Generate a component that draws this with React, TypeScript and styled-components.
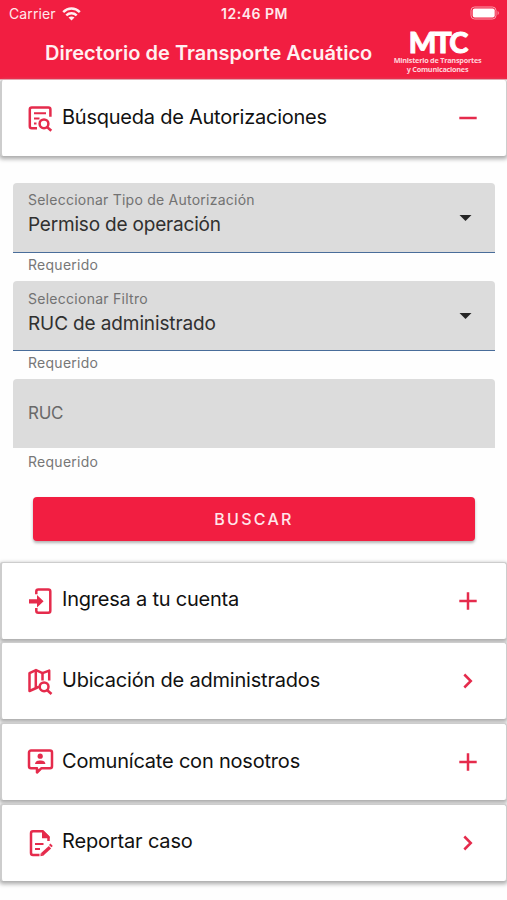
import React from "react";
import styled, { createGlobalStyle } from "styled-components";

const RED = "#f21e41";
const ICON = "#e52b4c";

const GlobalStyle = createGlobalStyle`
  * { box-sizing: border-box; }
  body { margin: 0; background: #fefefe; font-family: Inter, "Liberation Sans", sans-serif; }
`;

const Screen = styled.div`
  width: 507px;
  height: 900px;
  overflow: hidden;
  display: flex;
  flex-direction: column;
  background: #fefefe;
`;

const Header = styled.header`
  height: 80px;
  flex: none;
  background: ${RED};
  color: #ffe9ec;
  border-bottom: 1px solid #f4a3b0;
`;

const StatusBar = styled.div`
  height: 28px;
  display: grid;
  grid-template-columns: 1fr auto 1fr;
  align-items: center;
  padding: 0 7px 0 9px;
  font-size: 14px;
  line-height: 28px;
`;

const Carrier = styled.div`
  display: flex;
  align-items: center;
  gap: 6px;
  letter-spacing: 0.1px;
`;

const Clock = styled.div`
  font-weight: 600;
  font-size: 14px;
  letter-spacing: 0.5px;
`;

const Battery = styled.div`
  justify-self: end;
  display: flex;
  margin-top: -2px;
`;

const TitleBar = styled.div`
  display: flex;
  height: 51px;
  padding-left: 45px;
`;

const Title = styled.h1`
  margin: 0;
  width: 349px;
  font-size: 20px;
  line-height: 50px;
  font-weight: 600;
  letter-spacing: 0.02px;
  white-space: nowrap;
  color: #fff0f1;
`;

const Brand = styled.div`
  width: 87px;
  display: flex;
  flex-direction: column;
  align-items: center;
  color: #fff;
  white-space: nowrap;
`;

const BrandName = styled.div`
  font-family: Lato, "Noto Sans", sans-serif;
  font-size: 29px;
  line-height: 28px;
  font-weight: 900;
  letter-spacing: -2px;
  -webkit-text-stroke: 0.9px #fff;
`;

const BrandLine = styled.div`
  font-family: "Open Sans", "Noto Sans", sans-serif;
  font-size: 7.3px;
  line-height: 8.5px;
  font-weight: 700;
  letter-spacing: -0.25px;
  color: #ffd3da;
`;

const Card = styled.button<{ $first?: boolean }>`
  flex: none;
  width: 507px;
  height: ${(p) => (p.$first ? 76 : 77)}px;
  display: flex;
  align-items: center;
  padding: 0 26px 0 23px;
  background: #fff;
  border: solid #cdcdcd;
  border-width: ${(p) => (p.$first ? "0 1.5px 0 2px" : "1px 1.5px 0 2px")};
  border-radius: 3px;
  box-shadow: 0 2px 4px 1px #aaa;
  font-family: inherit;
  text-align: left;
`;

const CardLabel = styled.span<{ $spacing: number }>`
  flex: 1;
  margin-left: 8px;
  font-size: 20px;
  line-height: 24px;
  letter-spacing: ${(p) => p.$spacing}px;
  color: #111;
  white-space: nowrap;
  padding-bottom: 3px;
`;

const Glyph = styled.svg`
  flex: none;
  display: block;
`;

const Form = styled.form`
  flex: none;
  height: 405.5px;
  padding: 26.6px 12px 0 13px;
  display: flex;
  flex-direction: column;
`;

const Field = styled.div`
  height: 98.2px;
`;

const FieldBox = styled.div<{ $active?: boolean }>`
  height: ${(p) => (p.$active ? 70 : 68.8)}px;
  display: flex;
  align-items: center;
  justify-content: space-between;
  padding: ${(p) => (p.$active ? "1.5px" : "0")} 23px 0 15px;
  background: #dcdcdc;
  border-radius: 4px 4px 0 0;
  border-bottom: ${(p) => (p.$active ? "1.5px solid #496d9a" : "0")};
`;

const FieldText = styled.div`
  display: flex;
  flex-direction: column;
`;

const FieldLabel = styled.label<{ $spacing: number }>`
  font-size: 14px;
  line-height: 18px;
  letter-spacing: ${(p) => p.$spacing}px;
  color: #727272;
`;

const FieldValue = styled.div<{ $spacing: number }>`
  font-size: 19px;
  line-height: 24px;
  margin: 4px 0 7px;
  letter-spacing: ${(p) => p.$spacing}px;
  color: #303030;
`;

const Placeholder = styled.label`
  font-size: 17px;
  line-height: 20px;
  letter-spacing: -0.3px;
  color: #696969;
`;

const Hint = styled.div<{ $active?: boolean }>`
  padding-left: 15px;
  font-size: 14px;
  line-height: ${(p) => (p.$active ? 24 : 28)}px;
  letter-spacing: 0.27px;
  color: #777;
`;

const Submit = styled.button`
  height: 44px;
  margin: 19.5px 20px 0 20px;
  border: 0;
  padding: 0;
  border-radius: 4px;
  background: ${RED};
  color: #ffe6ea;
  font-family: inherit;
  font-weight: 500;
  font-size: 16px;
  letter-spacing: 2.3px;
  box-shadow: 0 2px 3px rgba(0, 0, 0, 0.3);
`;

const CardList = styled.nav`
  display: flex;
  flex-direction: column;
  gap: 3.75px;
`;

type IconName = "search" | "login" | "map" | "contact" | "report";

const drawings: Record<IconName, React.ReactNode> = {
  search: (
    <>
      <path d="M12 26.2H6.8a2 2 0 0 1-2-2V7.6a2 2 0 0 1 2-2h16.6a2 2 0 0 1 2 2v7.2" />
      <path d="M9 11.2h12M9 16.5h5.5M9 21.5h2.5" strokeWidth="2.1" />
      <circle cx="19" cy="21.8" r="4.4" />
      <path d="m22.3 25.2 4 3.6" strokeWidth="2.6" />
    </>
  ),
  login: (
    <g transform="translate(0 -1)">
      <path d="M11.3 10.3V7.6a2 2 0 0 1 2-2h10a2 2 0 0 1 2 2v19.2a2 2 0 0 1-2 2h-10a2 2 0 0 1-2-2V24" />
      <path d="M4 15.3h8V11l6.6 6.3-6.6 6.2v-4H4z" fill="currentColor" stroke="none" />
    </g>
  ),
  map: (
    <>
      <path d="M14 21.7 11.3 23 4.5 26V8.2l6.5-3.1 6.5 3 6.7-2.5v10" />
      <path d="M10.8 5.5v17.2M17.5 8.2v7.2" />
      <circle cx="19.1" cy="21.8" r="4.4" />
      <path d="m22.3 25.2 4.2 3.8" strokeWidth="2.6" />
    </>
  ),
  contact: (
    <g transform="translate(0 -.8)">
      <path d="M6 5.3h19a2 2 0 0 1 2 2V21a2 2 0 0 1-2 2h-8.5l-4.5 4.3V23H6a2 2 0 0 1-2-2V7.3a2 2 0 0 1 2-2Z" />
      <circle cx="15.2" cy="11" r="2.6" fill="currentColor" stroke="none" />
      <path d="M10 18.8c.5-3 2.4-3.5 5.2-3.5s4.8.5 5.2 3.5z" fill="currentColor" stroke="none" />
    </g>
  ),
  report: (
    <g transform="translate(0 -1)">
      <path d="M14.5 29H8a2 2 0 0 1-2-2V7.2a2 2 0 0 1 2-2h9.5l6 6V15" />
      <path d="M17 4.5v7.8h7.5v-1.7L18.3 4.5z" fill="currentColor" stroke="none" />
      <path d="M10 18h8.5M10 23h5" strokeWidth="2.2" />
      <path d="m17 28.5 8-7.3" strokeWidth="3.4" />
      <path d="M15.5 30.2v-3l3 2.4zM24 19l1.5-1.4 2.3 2.4-1.4 1.3z" fill="currentColor" stroke="none" />
    </g>
  ),
};

function CardIcon({ name }: { name: IconName }) {
  return (
    <Glyph width="29" height="32" viewBox="0 0 29 32" fill="none" color={ICON} stroke="currentColor" strokeWidth="2.5" strokeLinejoin="round">
      {drawings[name]}
    </Glyph>
  );
}

type Action = "minus" | "plus" | "next";
const actions: Record<Action, string> = {
  minus: "M1.3 12h17.4",
  plus: "M1.3 12h17.4M10 3.3v17.4",
  next: "m6.3 5.5 6.5 6.5-6.5 6.5",
};

function ActionIcon({ name }: { name: Action }) {
  return (
    <Glyph width="22" height="24" viewBox="0 0 22 24" fill="none" stroke={ICON} strokeWidth="2.5">
      <path d={actions[name]} />
    </Glyph>
  );
}

const Caret = () => (
  <Glyph width="13" height="8" viewBox="0 0 13 8">
    <path d="M.5 1h12l-6 6z" fill="#252525" />
  </Glyph>
);

const menu: { icon: IconName; label: string; action: Action; spacing: number }[] = [
  { icon: "login", label: "Ingresa a tu cuenta", action: "plus", spacing: -0.22 },
  { icon: "map", label: "Ubicación de administrados", action: "next", spacing: -0.2 },
  { icon: "contact", label: "Comunícate con nosotros", action: "plus", spacing: -0.2 },
  { icon: "report", label: "Reportar caso", action: "next", spacing: -0.16 },
];

export default function App() {
  return (
    <Screen>
      <GlobalStyle />
      <Header>
        <StatusBar>
          <Carrier>
            Carrier
            <Glyph width="19" height="14" viewBox="0 0 19 14" fill="none" stroke="#ffeef0" strokeWidth="2.5">
              <path d="M1.2 5.1c4.8-4.7 11.8-4.7 16.6 0M4.3 8.3c3-2.8 7.4-2.8 10.4 0" />
              <path d="M6.5 10.5c1.8-1.5 4.2-1.5 6 0l-3 3z" fill="#ffeef0" stroke="none" />
            </Glyph>
          </Carrier>
          <Clock>12:46 PM</Clock>
          <Battery>
            <Glyph width="30" height="14" viewBox="0 0 30 14">
              <rect x="1" y="1" width="25" height="12" rx="3.5" fill="none" stroke="#fa9bab" />
              <rect x="2.7" y="2.6" width="22" height="8.8" rx="2" fill="#fff" />
              <path d="M27.6 5c1.6.7 1.6 3.3 0 4z" fill="#fa9bab" />
            </Glyph>
          </Battery>
        </StatusBar>
        <TitleBar>
          <Title>Directorio de Transporte Acuático</Title>
          <Brand>
            <BrandName>MTC</BrandName>
            <BrandLine>Ministerio de Transportes</BrandLine>
            <BrandLine>y Comunicaciones</BrandLine>
          </Brand>
        </TitleBar>
      </Header>
      <Card $first>
        <CardIcon name="search" />
        <CardLabel $spacing={-0.24}>Búsqueda de Autorizaciones</CardLabel>
        <ActionIcon name="minus" />
      </Card>
      <Form>
        <Field>
          <FieldBox $active>
            <FieldText>
              <FieldLabel $spacing={0.24}>Seleccionar Tipo de Autorización</FieldLabel>
              <FieldValue $spacing={-0.19}>Permiso de operación</FieldValue>
            </FieldText>
            <Caret />
          </FieldBox>
          <Hint $active>Requerido</Hint>
        </Field>
        <Field>
          <FieldBox $active>
            <FieldText>
              <FieldLabel $spacing={0.27}>Seleccionar Filtro</FieldLabel>
              <FieldValue $spacing={-0.12}>RUC de administrado</FieldValue>
            </FieldText>
            <Caret />
          </FieldBox>
          <Hint $active>Requerido</Hint>
        </Field>
        <Field>
          <FieldBox>
            <Placeholder>RUC</Placeholder>
          </FieldBox>
          <Hint>Requerido</Hint>
        </Field>
        <Submit type="button">BUSCAR</Submit>
      </Form>
      <CardList>
        {menu.map((m) => (
          <Card key={m.label}>
            <CardIcon name={m.icon} />
            <CardLabel $spacing={m.spacing}>{m.label}</CardLabel>
            <ActionIcon name={m.action} />
          </Card>
        ))}
      </CardList>
    </Screen>
  );
}
